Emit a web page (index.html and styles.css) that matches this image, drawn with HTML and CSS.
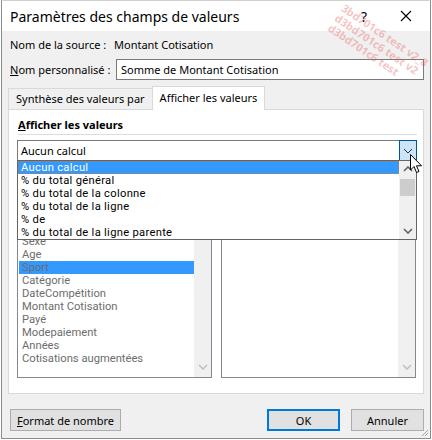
FILE: index.html
```html
<!DOCTYPE html>
<html>
<head>
<meta charset="utf-8">
<link rel="stylesheet" href="styles.css">
</head>
<body>
<div class="dialog">
  <div class="titlebar">
    <span class="title">Paramètres des champs de valeurs</span>
    <span class="tb-btns">
      <span class="help">?</span>
      <svg class="close" width="12" height="12" viewBox="0 0 12 12"><path d="M1 1L11 11M11 1L1 11" stroke="#000" stroke-width="1.1" fill="none"/></svg>
    </span>
  </div>
  <div class="content">
    <div class="row source"><span class="lbl">Nom de la source :</span><span>Montant Cotisation</span></div>
    <div class="row custom"><span class="lbl"><u>N</u>om personnalisé :</span><div class="input">Somme de Montant Cotisation</div></div>
    <div class="tabs">
      <div class="tab">Synthèse des valeurs par</div>
      <div class="tab active">Afficher les valeurs</div>
    </div>
    <div class="panel">
      <div class="group-title"><u>A</u>fficher les valeurs</div>
      <div class="sep"></div>
      <div class="combo-wrap">
        <div class="combo">
          <span class="combo-text">Aucun calcul</span>
          <span class="combo-btn"><svg width="10" height="6" viewBox="0 0 10 6"><path d="M1 1L5 5L9 1" stroke="#333" stroke-width="1" fill="none"/></svg></span>
        </div>
        <div class="dropdown">
          <ul class="options">
            <li class="sel">Aucun calcul</li>
            <li>% du total général</li>
            <li>% du total de la colonne</li>
            <li>% du total de la ligne</li>
            <li>% de</li>
            <li>% du total de la ligne parente</li>
          </ul>
          <div class="vscroll">
            <svg class="arrow" width="10" height="6" viewBox="0 0 10 6"><path d="M1 5L5 1L9 5" stroke="#606060" stroke-width="1.6" fill="none"/></svg>
            <div class="thumb"></div>
            <div class="spacer"></div>
            <svg class="arrow" width="10" height="6" viewBox="0 0 10 6"><path d="M1 1L5 5L9 1" stroke="#606060" stroke-width="1.6" fill="none"/></svg>
          </div>
        </div>
      </div>
      <div class="lists">
        <div class="listbox">
          <ul class="items">
            <li>Sexe</li>
            <li>Age</li>
            <li class="sel">Sport</li>
            <li>Catégorie</li>
            <li>DateCompétition</li>
            <li>Montant Cotisation</li>
            <li>Payé</li>
            <li>Modepaiement</li>
            <li>Années</li>
            <li>Cotisations augmentées</li>
          </ul>
          <div class="vscroll dis">
            <div class="spacer"></div>
            <svg class="arrow" width="10" height="6" viewBox="0 0 10 6"><path d="M1 1L5 5L9 1" stroke="#c0c0c0" stroke-width="1.6" fill="none"/></svg>
          </div>
        </div>
        <div class="listbox">
          <ul class="items"></ul>
          <div class="vscroll dis">
            <div class="spacer"></div>
            <svg class="arrow" width="10" height="6" viewBox="0 0 10 6"><path d="M1 1L5 5L9 1" stroke="#c0c0c0" stroke-width="1.6" fill="none"/></svg>
          </div>
        </div>
      </div>
    </div>
    <div class="buttons">
      <button class="btn fmt"><u>F</u>ormat de nombre</button>
      <span class="grow"></span>
      <button class="btn ok">OK</button>
      <button class="btn">Annuler</button>
    </div>
  </div>
  <svg class="grip" width="10" height="10" viewBox="0 0 10 10"><path d="M9 3L3 9M9 6L6 9" stroke="#a0a0a0" stroke-width="1"/></svg>
  <svg class="cursor" width="13" height="20" viewBox="0 0 13 20"><path d="M0.5 0.5L0.5 16L4 12.5L6.5 18.5L9 17.5L6.5 11.8L11.5 11.8Z" fill="#fff" stroke="#000" stroke-width="1" stroke-linejoin="round"/></svg>
  <div class="watermark">
    <span>3bd701c6 test v2_8</span>
    <span>d3bd701c6 test v2</span>
    <span>d3bd701c6 test</span>
  </div>
</div>
</body>
</html>
```
FILE: styles.css
```css
* { box-sizing: border-box; }
html, body { margin: 0; padding: 0; background: #fff; }
body {
  font-family: "Noto Sans", "Open Sans", sans-serif;
  font-size: 11px;
  color: #000;
}
.dialog {
  position: relative;
  width: 430px;
  height: 439px;
  margin-left: 1px;
  background: #f0f0f0;
  border: 1px solid #8c8c8c;
  border-top-color: #d0d0d0;
  overflow: hidden;
}
.titlebar {
  height: 30px;
  background: #fff;
  display: flex;
  align-items: center;
  padding-left: 8px;
}
.title { font-size: 14px; flex: 1; }
.tb-btns { display: flex; align-items: center; gap: 33px; padding-right: 18px; }
.help { font-size: 14px; }
.content { padding: 0 6px 0 6px; }
.row { display: flex; align-items: center; }
.source { height: 14px; margin-top: 6px; padding-left: 2px; }
.source .lbl { width: 104px; }
.custom { margin-top: 8px; padding-left: 2px; }
.custom .lbl { width: 106px; }
.input {
  flex: 1;
  height: 21px;
  background: #fff;
  border: 1px solid #7a7a7a;
  padding: 2px 4px;
  line-height: 15px;
}
.tabs { display: flex; align-items: flex-end; margin-top: 5px; height: 24px; }
.tab {
  height: 21px;
  padding: 0 7px;
  line-height: 20px;
  border: 1px solid #d9d9d9;
  border-bottom: none;
  border-right: none;
  background: #f0f0f0;
}
.tab.active {
  height: 24px;
  background: #fff;
  border-right: 1px solid #d9d9d9;
  line-height: 22px;
  margin-bottom: -1px;
  position: relative;
  z-index: 1;
}
.panel {
  background: #fff;
  border: 1px solid #d9d9d9;
  height: 285px;
  padding: 7px 6px 0 8px;
}
.group-title { font-weight: bold; height: 15px; line-height: 15px; padding-left: 1px; }
.sep { height: 1px; background: #dcdcdc; margin: 2px 0 0 1px; }
.combo-wrap { position: relative; margin-top: 5px; }
.combo {
  height: 21px;
  border: 1px solid #7a7a7a;
  display: flex;
  align-items: stretch;
  background: #fff;
}
.combo-text { flex: 1; padding-left: 3px; line-height: 19px; }
.combo-btn {
  width: 18px;
  background: #cce4f7;
  border: 1px solid #005499;
  margin: -1px -1px -1px 0;
  display: flex;
  align-items: center;
  justify-content: center;
}
.dropdown {
  position: absolute;
  left: 0; right: 0;
  top: 20px;
  height: 80px;
  border: 1px solid #646464;
  background: #fff;
  display: flex;
  z-index: 5;
}
.options {
  list-style: none; margin: 0; padding: 0; flex: 1;
  font-family: Roboto, "Noto Sans", sans-serif; font-size: 11.2px; letter-spacing: 0.3px;
}
.options li { height: 13px; line-height: 13px; padding-left: 3px; white-space: nowrap; }
.options li.sel {
  background: #3399ff;
  color: #fff;
  outline: 1px dotted #c07a3a;
  outline-offset: -1px;
}
.vscroll {
  width: 17px;
  background: #f0f0f0;
  display: flex;
  flex-direction: column;
  align-items: center;
}
.vscroll .arrow { margin: 5px 0; flex: none; }
.thumb { width: 15px; height: 17px; background: #cdcdcd; margin-top: 2px; }
.spacer { flex: 1; }
.lists {
  display: grid;
  grid-template-columns: 195px 195px;
  column-gap: 9px;
  margin-top: 78px;
}
.listbox {
  height: 139px;
  border: 1px solid #828790;
  display: flex;
  background: #fff;
  overflow: hidden;
}
.items {
  list-style: none; margin: -5px 0 0 0; padding: 0 0 0 1px; flex: 1; color: #6d6d6d;
  font-family: Roboto, "Noto Sans", sans-serif; font-size: 11.2px;
}
.items li { height: 13px; line-height: 13px; padding-left: 3px; white-space: nowrap; }
.items li.sel { background: #3399ff; }
.vscroll.dis .arrow { margin: 4px 0 7px; }
.buttons { display: flex; margin-top: 15px; gap: 11px; padding-left: 2px; padding-right: 0; }
.grow { flex: 1; }
.btn {
  font: inherit;
  height: 22px;
  background: #e1e1e1;
  border: 1px solid #adadad;
  padding: 0;
  color: #000;
}
.btn.fmt { width: 111px; }
.btn.ok { width: 73px; border: 2px solid #0078d7; }
.btn:last-child { width: 73px; }
.grip { position: absolute; right: 1px; bottom: 1px; }
.cursor { position: absolute; left: 408px; top: 153px; z-index: 10; }
.watermark {
  position: absolute;
  left: 344px;
  top: 1px;
  transform: rotate(34deg);
  transform-origin: 0 0;
  display: flex;
  flex-direction: column;
  line-height: 12px;
  color: rgba(232, 80, 80, 0.35);
  font-size: 11px;
  font-weight: bold;
  pointer-events: none;
  z-index: 20;
  white-space: nowrap;
}
```
